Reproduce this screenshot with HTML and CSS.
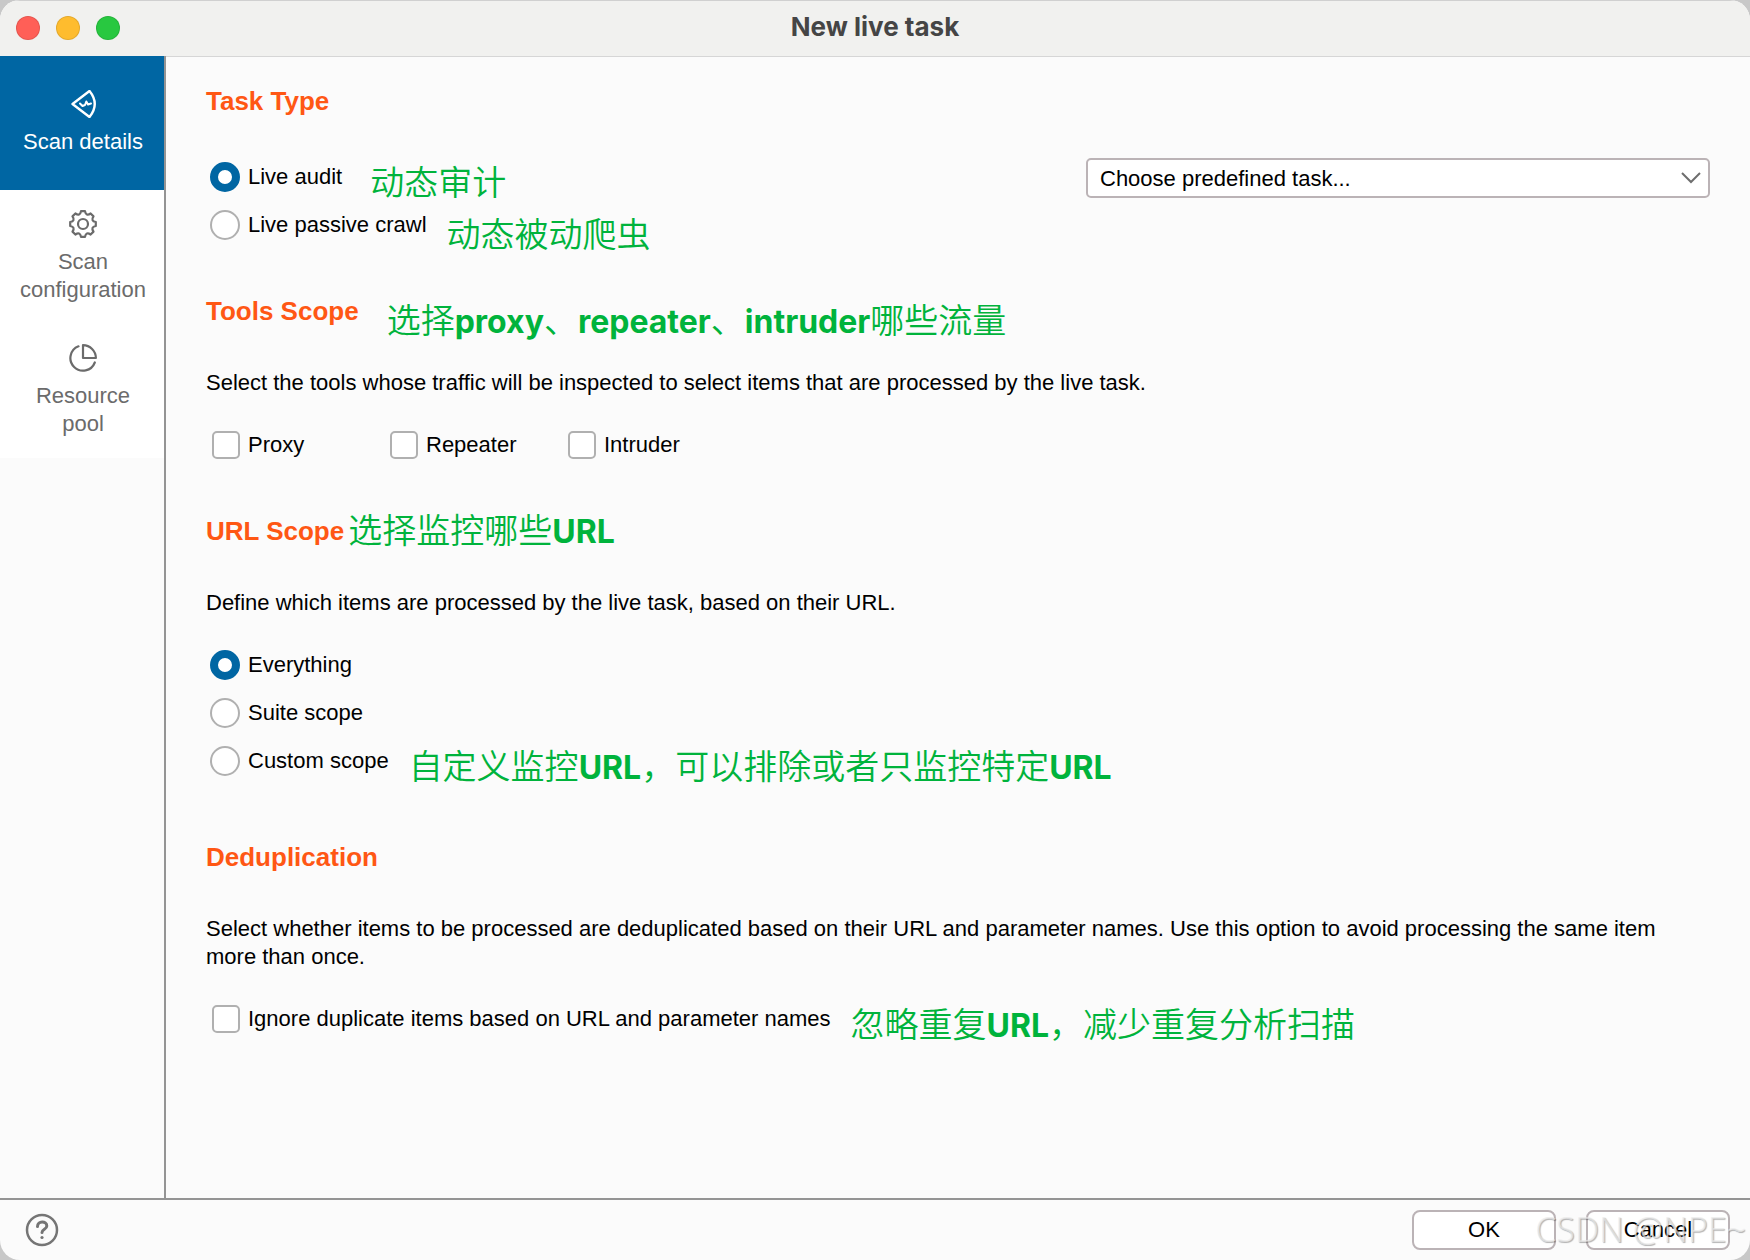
FILE: index.html
```html
<!DOCTYPE html>
<html lang="en">
<head>
  <meta charset="UTF-8" />
  <title>New live task</title>
  <link rel="stylesheet" href="styles.css">
</head>
<body>
  <div class="window">
    <header class="titlebar">
      <div class="lights">
        <span class="light red"></span>
        <span class="light yellow"></span>
        <span class="light green"></span>
      </div>
      <h1>New live task</h1>
    </header>

    <div class="main">
      <!-- Left tabs -->
      <nav class="sidebar">
        <button type="button" class="tab active">
          <svg width="28" height="28" viewBox="0 0 28 28" fill="none" stroke="currentColor" stroke-width="2.400" stroke-linejoin="round" stroke-linecap="round">
            <path d="M3.500 14 L20.500 1 Q31 14 20.500 27 Z" />
            <path d="M11 13.500 L13.500 16 L16 15 L17.300 11.500 L19 14.500 L22 13.500" stroke-width="2" />
          </svg>
          <span>Scan details</span>
        </button>
        <button type="button" class="tab">
          <svg width="28" height="28" viewBox="-14 -14 28 28" fill="none" stroke="currentColor" stroke-width="2.200" stroke-linejoin="round">
            <path d="M-2 -12.800 H2 Q3.100 -7.400 7.600 -10.500 L10.500 -7.600 Q7.400 -3.100 12.800 -2 V2 Q7.400 3.100 10.500 7.600 L7.600 10.500 Q3.100 7.400 2 12.800 H-2 Q-3.100 7.400 -7.600 10.500 L-10.500 7.600 Q-7.400 3.100 -12.800 2 V-2 Q-7.400 -3.100 -10.500 -7.600 L-7.600 -10.500 Q-3.100 -7.400 -2 -12.800 Z" />
            <circle cx="0" cy="0" r="5" />
          </svg>
          <span>Scan<br>configuration</span>
        </button>
        <button type="button" class="tab">
          <svg width="28" height="28" viewBox="0 0 28 28" fill="none" stroke="currentColor" stroke-width="2.200" stroke-linejoin="round" stroke-linecap="round">
            <path d="M14 1.100 A13 13 0 0 1 26.900 14 H14 Z" />
            <path d="M9.500 2.300 A12.600 12.600 0 1 0 25.800 18.500" />
          </svg>
          <span>Resource<br>pool</span>
        </button>
      </nav>

      <!-- Task options -->
      <main class="content">
        <section class="task-type">
          <div class="heading"><h2>Task Type</h2></div>
          <div class="task-row">
            <div>
              <div class="option">
                <label><input type="radio" name="task" checked>Live audit</label>
                <span class="note gap-l drop">动态审计</span>
              </div>
              <div class="option">
                <label><input type="radio" name="task">Live passive crawl</label>
                <span class="note gap-m drop-more">动态被动爬虫</span>
              </div>
            </div>
            <select class="predefined" aria-label="Predefined task">
              <option>Choose predefined task...</option>
            </select>
          </div>
        </section>

        <section>
          <div class="heading">
            <h2>Tools Scope</h2>
            <span class="note gap-l drop-more">选择<b>proxy</b>、<b>repeater</b>、<b>intruder</b>哪些流量</span>
          </div>
          <p>Select the tools whose traffic will be inspected to select items that are processed by the live task.</p>
          <div class="tools">
            <div class="option"><label><input type="checkbox">Proxy</label></div>
            <div class="option"><label><input type="checkbox">Repeater</label></div>
            <div class="option"><label><input type="checkbox">Intruder</label></div>
          </div>
        </section>

        <section>
          <div class="heading">
            <h2>URL Scope</h2>
            <span class="note gap-s">选择监控哪些<b>URL</b></span>
          </div>
          <p>Define which items are processed by the live task, based on their URL.</p>
          <div class="option"><label><input type="radio" name="scope" checked>Everything</label></div>
          <div class="option"><label><input type="radio" name="scope">Suite scope</label></div>
          <div class="option">
            <label><input type="radio" name="scope">Custom scope</label>
            <span class="note gap-m drop">自定义监控<b>URL</b>，可以排除或者只监控特定<b>URL</b></span>
          </div>
        </section>

        <section class="dedup">
          <div class="heading"><h2>Deduplication</h2></div>
          <p>Select whether items to be processed are deduplicated based on their URL and parameter names. Use this option to avoid processing the same item more than once.</p>
          <div class="option">
            <label><input type="checkbox">Ignore duplicate items based on URL and parameter names</label>
            <span class="note gap-m drop">忽略重复<b>URL</b>，减少重复分析扫描</span>
          </div>
        </section>
      </main>
    </div>

    <footer class="footer">
      <button type="button" class="help" aria-label="Help">
        <svg width="34" height="34" viewBox="0 0 34 34" fill="none" stroke="currentColor" stroke-width="3" stroke-linecap="round">
          <circle cx="17" cy="17" r="15" stroke-width="2.500" />
          <path d="M12.500 13.500 C12.500 7.500 21.800 7.500 21.800 13 C21.800 16.500 17 16 17 19.500" />
          <circle cx="17" cy="24.500" r="1.600" fill="currentColor" stroke="none" />
        </svg>
      </button>
      <div class="actions">
        <button type="button" class="btn">OK</button>
        <button type="button" class="btn">Cancel</button>
      </div>
      <span class="watermark">CSDN @NPE~</span>
    </footer>
  </div>
</body>
</html>
```
FILE: styles.css
```css
* {
  box-sizing: border-box;
}

body {
  margin: 0;
  background: #c8c8c8;
  font-family: "Liberation Sans", Arial, sans-serif;
  font-size: 22px;
  line-height: 28px;
  color: #000;
}

button, select, input {
  font: inherit;
  color: inherit;
  margin: 0;
}

.window {
  display: flex;
  flex-direction: column;
  min-height: 100vh;
  background: #fbfbfb;
  border-radius: 20px;
  overflow: hidden;
}

/* Title bar */
.titlebar {
  display: grid;
  grid-template-columns: 1fr auto 1fr;
  align-items: center;
  height: 57px;
  padding: 0 16px 2px;
  background: #f1f1ef;
  border-top: 1px solid #d0d0d0;
  border-bottom: 1px solid #d6d6d6;
}

.titlebar h1 {
  margin: 0;
  padding-bottom: 2px;
  font-family: Inter, sans-serif;
  font-size: 26px;
  font-weight: 700;
  color: #454545;
}

.lights {
  display: flex;
  gap: 16px;
}

.light {
  width: 24px;
  height: 24px;
  border-radius: 50%;
  border: 1px solid rgba(0, 0, 0, 0.1);
}

.red { background: #ff5f57; }
.yellow { background: #febc2e; }
.green { background: #28c840; }

.main {
  display: flex;
  flex: 1;
}

/* Sidebar */
.sidebar {
  flex: none;
  width: 166px;
  margin-top: -1px;
  border-right: 2px solid #949494;
}

.tab {
  display: flex;
  flex-direction: column;
  align-items: center;
  justify-content: center;
  gap: 10px;
  width: 100%;
  height: 134px;
  padding: 0 0 0 2px;
  border: 0;
  background: #fff;
  color: #6b6b6b;
}

.tab.active {
  background: #0066a3;
  color: #fff;
}

/* Content */
.content {
  flex: 1;
  padding: 29px 40px;
}

section {
  margin-bottom: 47px;
}

.heading {
  display: flex;
  align-items: center;
  height: 30px;
  margin-bottom: 43px;
}

.task-type .heading {
  margin-bottom: 37px;
}

.dedup {
  margin-top: 57px;
}

h2 {
  margin: 0;
  font-size: 26px;
  line-height: 30px;
  color: #ff5714;
}

p {
  margin: 0 0 24px;
}

.task-row {
  display: flex;
  justify-content: space-between;
  align-items: flex-start;
}

.option {
  display: flex;
  align-items: center;
  height: 48px;
}

.option label {
  display: flex;
  align-items: center;
}

.tools {
  display: grid;
  grid-template-columns: repeat(3, 178px);
}

input[type="radio"],
input[type="checkbox"] {
  appearance: none;
  flex: none;
  background: #fff;
  border: 2px solid #b0b0b0;
}

input[type="radio"] {
  width: 30px;
  height: 30px;
  margin: 0 8px 0 4px;
  border-radius: 50%;
}

input[type="radio"]:checked {
  border: 8px solid #0066a3;
}

input[type="checkbox"] {
  width: 28px;
  height: 28px;
  margin: 0 8px 0 6px;
  border-radius: 5px;
}

.predefined {
  appearance: none;
  width: 624px;
  height: 40px;
  margin-top: 5px;
  padding: 1px 12px 0;
  border: 2px solid #bbb3b6;
  border-radius: 5px;
  background: #fff url("data:image/svg+xml,%3Csvg xmlns='http://www.w3.org/2000/svg' width='20' height='12' fill='none' stroke='%236e6e6e' stroke-width='2'%3E%3Cpath d='M1 1l9 9 9-9'/%3E%3C/svg%3E") no-repeat right 7px center;
}

/* Green annotations */
.note {
  font-family: Inter, "Noto Sans CJK SC", sans-serif;
  font-size: 34px;
  font-weight: 350;
  line-height: 36px;
  white-space: nowrap;
  color: #00b33c;
}

.note b {
  font-size: 32px;
  font-weight: 700;
}

.gap-s { margin-left: 4px; }
.gap-m { margin-left: 20px; }
.gap-l { margin-left: 28px; }
.drop { padding-top: 12px; }
.drop-more { padding-top: 20px; }

/* Footer */
.footer {
  position: relative;
  display: flex;
  align-items: center;
  justify-content: space-between;
  height: 62px;
  padding: 0 20px 0 25px;
  border-top: 2px solid #949494;
}

.help {
  display: flex;
  padding: 0;
  border: 0;
  background: none;
  color: #757575;
}

.actions {
  display: flex;
  gap: 30px;
}

.btn {
  width: 144px;
  height: 40px;
  padding: 0;
  border: 2px solid #bbb3b6;
  border-radius: 8px;
  background: #fff;
}

.watermark {
  position: absolute;
  right: 4px;
  bottom: 13px;
  font-family: "Noto Sans", sans-serif;
  font-size: 34px;
  font-weight: 300;
  line-height: 36px;
  color: rgba(235, 235, 235, 0.7);
  text-shadow: 1px 1px 1px rgba(0, 0, 0, 0.3);
  pointer-events: none;
}
```
